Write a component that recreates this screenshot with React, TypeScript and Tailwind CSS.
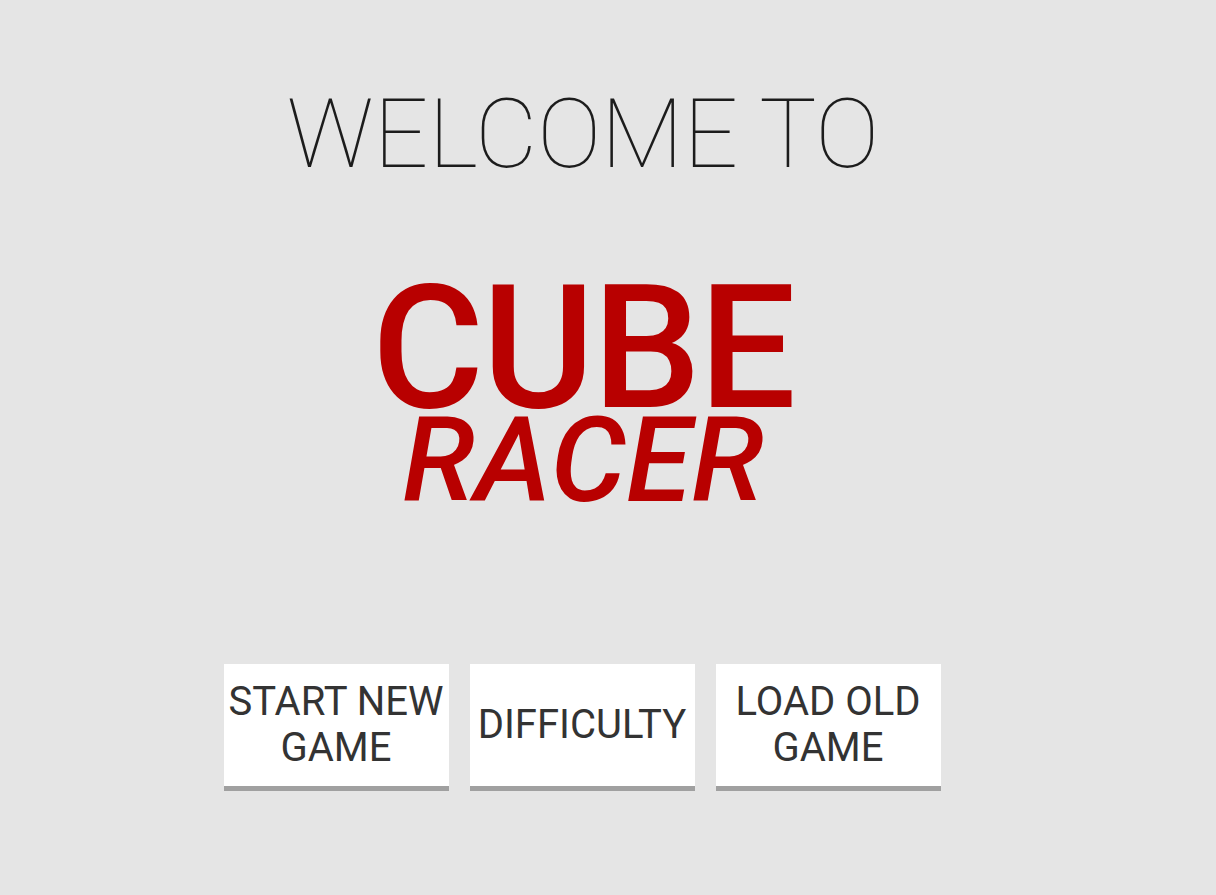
export default function App() {
  const buttons = [
    ["START NEW", "GAME"],
    ["DIFFICULTY"],
    ["LOAD OLD", "GAME"],
  ];

  return (
    <div className="min-h-[895px] w-full bg-[#e5e5e5] font-['Roboto',sans-serif]">
      <div className="flex w-[1166px] flex-col items-center">
        <h1 className="mt-[86px] text-[96px] font-thin leading-none text-[#1c1c1c]">
          WELCOME TO
        </h1>

        <div className="mt-[103px] flex flex-col items-center text-[#b80000]">
          <h2 className="text-[172px] font-medium leading-[126px] tracking-[-2px]">CUBE</h2>
          <h3 className="text-[119px] font-medium italic leading-[100px]">RACER</h3>
        </div>

        <div className="mt-[153px] flex gap-[21px] pr-[2px]">
          {buttons.map((lines) => (
            <button
              key={lines.join(" ")}
              className="flex h-[127px] w-[225px] flex-col items-center justify-center border-b-[5px] border-[#a0a0a0] bg-white text-[40px] leading-[46px] text-[#333]"
            >
              {lines.map((l) => (
                <span key={l}>{l}</span>
              ))}
            </button>
          ))}
        </div>
      </div>
    </div>
  );
}
